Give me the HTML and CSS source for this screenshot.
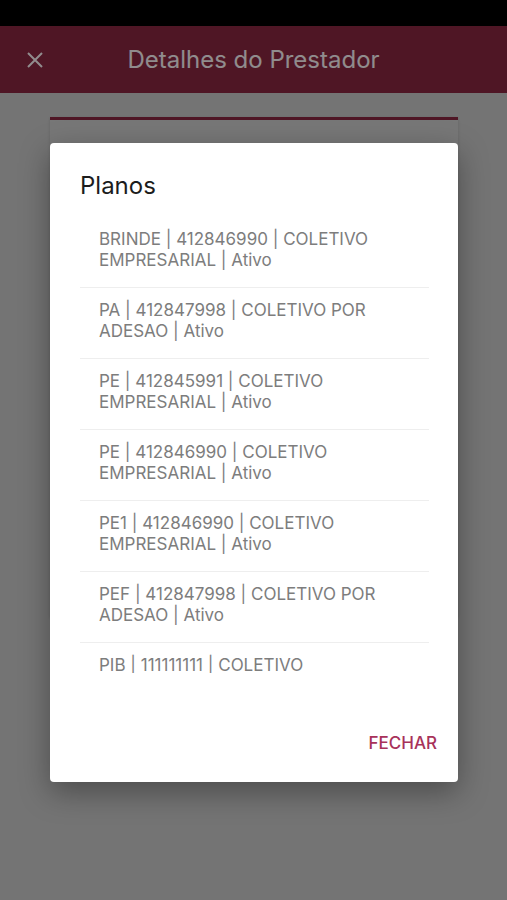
FILE: index.html
```html
<!DOCTYPE html>
<html lang="pt">
<head>
    <meta charset="UTF-8">
    <meta name="viewport" content="width=device-width, initial-scale=1.0">
    <title>Detalhes do Prestador</title>
    <link rel="stylesheet" href="styles.css">
</head>
<body>
    <div class="status_bar"></div>

    <div class="top_bar">
        <a href="#" class="close_btn">
            <svg width="18" height="18" viewBox="0 0 18 18">
                <path d="M2 2 L16 16 M16 2 L2 16" stroke="currentColor" stroke-width="2" fill="none"/>
            </svg>
        </a>
        <h1 class="top_title">Detalhes do Prestador</h1>
    </div>

    <div class="page_content">
        <div class="info_card"></div>
    </div>

    <div class="overlay">
        <div class="dialog">
            <h2 class="dialog_title">Planos</h2>
            <ul class="plan_list">
                <li class="plan_item">BRINDE | 412846990 | COLETIVO EMPRESARIAL | Ativo</li>
                <li class="plan_item">PA | 412847998 | COLETIVO POR ADESAO | Ativo</li>
                <li class="plan_item">PE | 412845991 | COLETIVO EMPRESARIAL | Ativo</li>
                <li class="plan_item">PE | 412846990 | COLETIVO EMPRESARIAL | Ativo</li>
                <li class="plan_item">PE1 | 412846990 | COLETIVO EMPRESARIAL | Ativo</li>
                <li class="plan_item">PEF | 412847998 | COLETIVO POR ADESAO | Ativo</li>
                <li class="plan_item">PIB | 111111111 | COLETIVO EMPRESARIAL | Ativo</li>
            </ul>
            <div class="dialog_actions">
                <a href="#" class="btn_close">FECHAR</a>
            </div>
        </div>
    </div>
</body>
</html>
```

FILE: styles.css
```css
*{
  box-sizing: border-box;
}
html, body{
  margin: 0;
  height: 100%;
}
body{
  font-family: Inter, Roboto, "Liberation Sans", sans-serif;
  background-color: #c2c2c2;
  position: relative;
  overflow: hidden;
}
div.status_bar{
  height: 26px;
  background-color: #000;
}
div.top_bar{
  height: 67px;
  background-color: #84253f;
  display: flex;
  align-items: center;
  position: relative;
}
a.close_btn{
  color: #f2eaec;
  display: flex;
  margin-left: 26px;
}
h1.top_title{
  margin: 0 auto;
  padding-right: 44px;
  font-size: 24px;
  font-weight: 400;
  color: #f0e9eb;
}
div.page_content{
  padding: 24px 49px 0 50px;
}
div.info_card{
  border-top: 3px solid #84253f;
  background-color: #c6c6c6;
  height: 500px;
  box-shadow: 0 1px 3px rgba(0, 0, 0, 0.15);
}

/* fundo escuro do modal */
div.overlay{
  position: absolute;
  inset: 0;
  background-color: rgba(0, 0, 0, 0.4);
  padding: 143px 49px 0 50px;
}
div.dialog{
  background-color: #fff;
  border-radius: 4px;
  height: 639px;
  box-shadow: 0 10px 30px rgba(0, 0, 0, 0.35);
  padding: 0 29px 0 30px;
  display: flex;
  flex-direction: column;
}
h2.dialog_title{
  margin: 0;
  padding-top: 28px;
  height: 74px;
  font-size: 24px;
  font-weight: 400;
  color: #1c1c1c;
}
ul.plan_list{
  list-style: none;
  margin: 0;
  padding: 0;
  height: 456px;
  overflow: hidden;
}
li.plan_item{
  padding: 12px 12px 16px 19px;
  font-size: 17px;
  line-height: 21px;
  color: #7d7d7d;
  border-bottom: 1px solid #eee;
  height: 71px;
}
div.dialog_actions{
  display: flex;
  justify-content: flex-end;
  margin-right: -8px;
  padding-top: 52px;
}
a.btn_close{
  text-decoration: none;
  color: #a8325a;
  font-size: 17px;
  font-weight: 500;
  line-height: 36px;
}
```
